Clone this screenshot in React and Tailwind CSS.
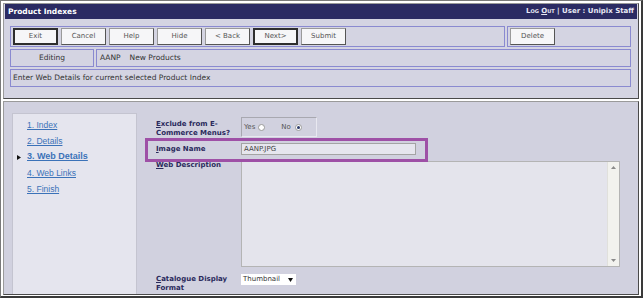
import React from 'react'

const buttons = ['Exit', 'Cancel', 'Help', 'Hide', '< Back', 'Next>', 'Submit']
const focused = ['Exit', 'Next>']

const steps = [
  { label: '1. Index' },
  { label: '2. Details' },
  { label: '3. Web Details', current: true },
  { label: '4. Web Links' },
  { label: '5. Finish' },
]

const Btn = ({ label }) => (
  <div
    className={`w-[45px] h-[17px] flex items-center justify-center bg-[#f6f6f8] text-[#555] text-[7px] ${
      focused.includes(label)
        ? 'border-2 border-[#2e2e2e]'
        : 'border border-t-[#9a9a9a] border-l-[#9a9a9a] border-r-[#555] border-b-[#555]'
    }`}
  >
    {label}
  </div>
)

// label with underlined access key; each line is its own block
const Label = ({ lines, className = '' }) => (
  <div className={`w-[85px] shrink-0 text-[7px] leading-[9px] font-bold text-[#2a2a5c] ${className}`}>
    <div className="whitespace-nowrap">
      <u>{lines[0][0]}</u>
      {lines[0].slice(1)}
    </div>
    {lines[1] && <div className="whitespace-nowrap">{lines[1]}</div>}
  </div>
)

const Radio = ({ checked }) => (
  <span className="w-[7px] h-[7px] rounded-full border border-[#9a9a9a] bg-white flex items-center justify-center">
    {checked && <span className="w-[3px] h-[3px] rounded-full bg-[#2a3a6a]" />}
  </span>
)

export default function App() {
  return (
    <div className="w-[644px] h-[299px] bg-white overflow-hidden font-['DejaVu_Sans',sans-serif]">
      <div className="w-[643px] h-[298px] border-l border-t border-[#7a7a7a] border-r-2 border-b-2 border-r-[#3a3a3a] border-b-[#3a3a3a] pt-[2px] pl-[2px] pr-[2px] pb-px flex flex-col gap-[2px]">
        {/* Top panel */}
        <div className="h-[96px] shrink-0 border border-t-[#9a9a9a] border-l-[#9a9a9a] border-r-[#4a4a4a] border-b-[#4a4a4a] bg-[#d4d4e2] px-px flex flex-col">
          <div className="h-[15px] bg-[#2b2b63] flex items-center justify-between pl-[3px] pr-[3px]">
            <span className="text-white font-bold text-[7.5px]">Product Indexes</span>
            <span className="text-[#e8e8f4] font-bold text-[7px]">
              <span className="[font-variant:small-caps]">
                Log <u>O</u>ut
              </span>{' '}
              | User : Unipix Staff
            </span>
          </div>

          <div className="pl-[5px] pr-[6px] pt-[7px] flex flex-col gap-[2px]">
            {/* toolbar */}
            <div className="flex gap-[2px] h-[21px]">
              <div className="w-[495px] border border-[#8a8ad0] flex items-center gap-[3px] pl-[2px]">
                {buttons.map((b) => (
                  <Btn key={b} label={b} />
                ))}
              </div>
              <div className="flex-1 border border-[#8a8ad0] flex items-center pl-[2px]">
                <Btn label="Delete" />
              </div>
            </div>

            {/* record row */}
            <div className="flex gap-[2px] h-[18px] text-[7.5px] text-[#333]">
              <div className="w-[84px] border border-[#8a8ad0] flex items-center justify-center">Editing</div>
              <div className="flex-1 border border-[#8a8ad0] flex items-center pl-[3px] gap-[9px]">
                <span>AANP</span>
                <span>New Products</span>
              </div>
            </div>

            {/* instruction */}
            <div className="h-[18px] border border-[#8a8ad0] flex items-center pl-[2px] text-[7.5px] text-[#333]">
              Enter Web Details for current selected Product Index
            </div>
          </div>
        </div>

        {/* Bottom panel */}
        <div className="flex-1 relative border border-t-[#9a9a9a] border-l-[#9a9a9a] border-r-[#4a4a4a] border-b-[#4a4a4a] bg-[#d1d1df] flex overflow-hidden">
          {/* wizard steps */}
          <div className="ml-[8px] mt-[11px] w-[125px] shrink-0 bg-[#e5e5ee] border border-[#c4c4d0] border-b-0 pt-[3px] pl-[14px] flex flex-col font-['Liberation_Sans',sans-serif]">
            {steps.map((s) => (
              <div key={s.label} className="h-[16px] flex items-center relative">
                {s.current && (
                  <svg className="absolute left-[-10px] top-[6px]" width="4" height="5" viewBox="0 0 4 5">
                    <path d="M0 0 L4 2.5 L0 5 Z" fill="#111" />
                  </svg>
                )}
                <span
                  className={`underline text-[#3b72b8] ${
                    s.current ? 'font-bold text-[9px]' : 'text-[8.5px]'
                  }`}
                >
                  {s.label}
                </span>
              </div>
            ))}
          </div>

          {/* form */}
          <div className="ml-[19px] pt-[15px] flex flex-col">
            <div className="flex h-[20px]">
              <Label lines={['Exclude from E-', 'Commerce Menus?']} className="pt-[3px]" />
              <div className="w-[76px] h-[20px] border border-t-[#a8a8b0] border-l-[#a8a8b0] border-r-[#e8e8f0] border-b-[#e8e8f0] flex items-center pl-[2px] text-[7px] text-[#555]">
                <span className="mr-[3px]">Yes</span>
                <Radio />
                <span className="ml-[16px] mr-[4px]">No</span>
                <Radio checked />
              </div>
            </div>

            <div className="flex h-[24px] items-center">
              <Label lines={['Image Name']} />
              <div className="w-[175px] h-[12px] bg-[#e6e6ee] border border-[#a4a4a4] flex items-center pl-[2px] text-[7px] text-[#444]">
                AANP.JPG
              </div>
            </div>

            <div className="flex">
              <Label lines={['Web Description']} />
              <div className="w-[379px] h-[106px] bg-[#e4e4ec] border border-[#b4b4b4] flex justify-end">
                <div className="w-[12px] bg-[#f2f2ee] border-l border-[#e0e0dc] flex flex-col justify-between items-center py-[4px]">
                  <svg width="5" height="3" viewBox="0 0 5 3">
                    <path d="M0 3 L2.5 0 L5 3 Z" fill="#8a8a8a" />
                  </svg>
                  <svg width="5" height="3" viewBox="0 0 5 3">
                    <path d="M0 0 L2.5 3 L5 0 Z" fill="#8a8a8a" />
                  </svg>
                </div>
              </div>
            </div>

            <div className="flex mt-[7px]">
              <Label lines={['Catalogue Display', 'Format']} className="pt-px" />
              <div className="w-[55px] h-[11px] bg-white flex items-center justify-between pl-[2px] pr-[3px] text-[7px] text-[#333]">
                <span>Thumbnail</span>
                <svg width="5" height="4" viewBox="0 0 5 4">
                  <path d="M0 0 L5 0 L2.5 4 Z" fill="#111" />
                </svg>
              </div>
            </div>
          </div>

          {/* highlight annotation */}
          <div className="absolute left-[141px] top-[36px] w-[283px] h-[24px] border-[3px] border-[#9e50a6]" />
        </div>
      </div>
    </div>
  )
}
